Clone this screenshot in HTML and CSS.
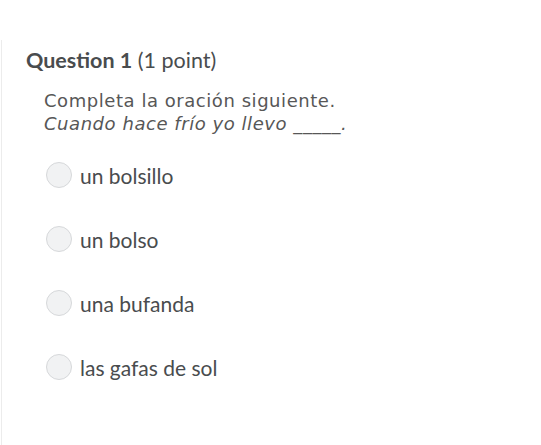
FILE: index.html
```html
<!DOCTYPE html>
<html>
<head>
<meta charset="utf-8">
<link rel="stylesheet" href="styles.css">
</head>
<body>
<div class="page">
  <div class="question">
    <h2 class="qtitle"><strong>Question 1</strong> (1 point)</h2>
    <div class="prompt">
      <div>Completa la oración siguiente.</div>
      <div class="it">Cuando hace frío yo llevo _____.</div>
    </div>
    <ul class="options">
      <li class="opt"><span class="radio"></span><span class="label">un bolsillo</span></li>
      <li class="opt"><span class="radio"></span><span class="label">un bolso</span></li>
      <li class="opt"><span class="radio"></span><span class="label">una bufanda</span></li>
      <li class="opt"><span class="radio"></span><span class="label">las gafas de sol</span></li>
    </ul>
  </div>
</div>
</body>
</html>
```
FILE: styles.css
```css
html, body { margin: 0; padding: 0; background: #fff; }
body { width: 541px; height: 445px; overflow: hidden; font-family: Lato, "Liberation Sans", sans-serif; }
.page { padding-top: 40px; height: 405px; }
.question { border-left: 1px solid #ececec; margin-left: 1px; height: 100%; padding-left: 24px; }
.qtitle { margin: 0; padding-top: 8px; font-size: 21.5px; font-weight: 400; color: #494c4e; line-height: 24px; }
.qtitle strong { font-weight: 700; }
.prompt { margin: 17px 0 0 18px; font-family: "DejaVu Sans", sans-serif; font-size: 18px; letter-spacing: 0.55px; line-height: 23px; color: #575757; font-weight: 400; }
.it { font-style: italic; }
.options { list-style: none; margin: 27px 0 0 20px; padding: 0; }
.opt { display: flex; align-items: center; height: 26px; margin-bottom: 38px; }
.radio { width: 26px; height: 26px; border-radius: 50%; border: 1px solid #d6d8da; background: #f1f2f3; box-sizing: border-box; margin-right: 8px; flex: none; }
.label { font-size: 21px; color: #494c4e; }
```
